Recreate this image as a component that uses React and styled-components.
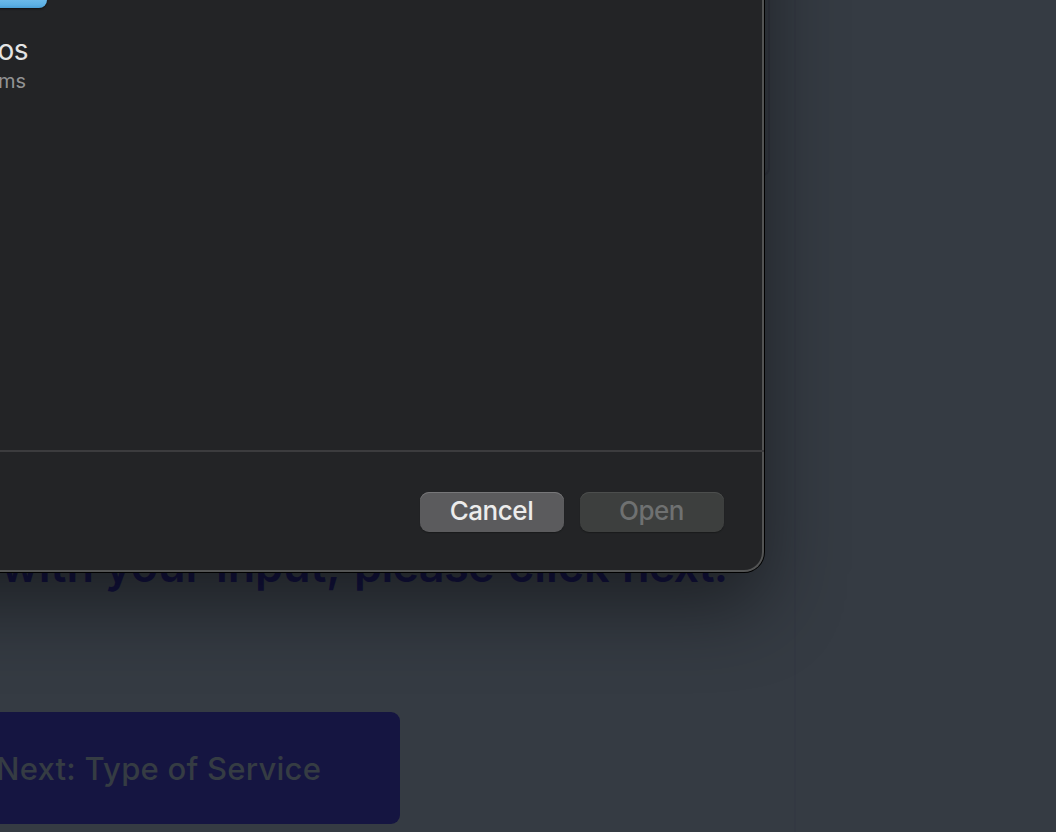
import React from "react";
import styled, { createGlobalStyle } from "styled-components";

const GlobalStyle = createGlobalStyle`
  * { box-sizing: border-box; }
  body { margin: 0; background: #353b43; overflow: hidden; }
`;

const Page = styled.div`
  position: relative;
  width: 1056px;
  height: 832px;
  overflow: hidden;
  background: #353b43;
  font-family: Inter, "Liberation Sans", sans-serif;
`;

const FormCard = styled.main`
  display: flex;
  flex-direction: column;
  align-items: flex-start;
  width: 796px;
  height: 832px;
  border-right: 2px solid #333842;
`;

const UploadPanel = styled.section`
  width: 770px;
  height: 176px;
  border: 2px solid #30343e;
  border-width: 0 2px 2px 0;
  border-radius: 0 0 8px 0;
`;

const Instruction = styled.p`
  display: flex;
  margin: 360px 0 0;
  height: 60px;
  padding-left: 1px;
  color: #131340;
  font-size: 45px;
  font-weight: 600;
  line-height: 60px;
  white-space: nowrap;
`;

const Word = styled.span`
  flex: none;
  width: ${(p) => p.$width}px;
  letter-spacing: ${(p) => p.$spacing || 0}px;
`;

const NextButton = styled.button`
  display: flex;
  align-items: center;
  width: 408px;
  height: 112px;
  margin: 116px 0 0 -8px;
  padding: 0 0 0 4px;
  border: 0;
  border-radius: 9px;
  background: #151541;
  color: #353c43;
  font-family: inherit;
  font-size: 31px;
  font-weight: 530;
  letter-spacing: 0.25px;
  white-space: nowrap;
`;

const Dialog = styled.div`
  position: absolute;
  top: -200px;
  left: -200px;
  display: flex;
  flex-direction: column;
  width: 964px;
  height: 772px;
  padding: 200px 0 0 200px;
  border: 2px solid #535454;
  border-top: 0;
  border-left: 0;
  border-radius: 20px;
  background: #232426;
  box-shadow: 0 0 0 1px #000, 0 34px 80px rgba(0, 0, 0, 0.45);
`;

const FileArea = styled.div`
  height: 450px;
`;

const FolderBottom = styled.div`
  width: 55px;
  height: 8px;
  margin-left: -8px;
  border-radius: 0 0 8px 0;
  background: linear-gradient(#6bb9e9 0, #5cb0e4 5px, #4a9fd6 8px);
  box-shadow: 0 1px 2px #111;
`;

const FolderName = styled.div`
  width: 28px;
  height: 32px;
  margin-top: 26px;
  display: flex;
  justify-content: flex-end;
  color: #e4e4e4;
  font-size: 28px;
  letter-spacing: -0.5px;
  line-height: 32px;
`;

const FolderCount = styled(FolderName)`
  width: 26px;
  margin-top: -1px;
  color: #929394;
  font-size: 20px;
  letter-spacing: 0;
`;

const Actions = styled.footer`
  display: flex;
  justify-content: flex-end;
  gap: 16px;
  height: 120px;
  margin-right: -2px;
  padding: 40px 40px 0 0;
  border-top: 2px solid #3c3c3e;
`;

const ActionButton = styled.button`
  width: 144px;
  height: 40px;
  padding: 0 1px 4px 0;
  border: 0;
  border-radius: 9px;
  background: ${(p) => (p.disabled ? "#3d3f3e" : "#5b5b5d")};
  color: ${(p) => (p.disabled ? "#6f7171" : "#ececec")};
  box-shadow: inset 0 1px 0 ${(p) => (p.disabled ? "#4c4e4d" : "#777779")}, 0 1px 1px #1a1b1c;
  font-family: inherit;
  font-size: 26px;
  font-weight: ${(p) => (p.disabled ? 450 : 480)};
  letter-spacing: -0.45px;
`;

const WORDS = [
  { text: "with", width: 104 },
  { text: "your", width: 111 },
  { text: "input,", width: 138, spacing: -0.1 },
  { text: "please", width: 154, spacing: -0.7 },
  { text: "click", width: 114 },
  { text: "next.", width: 104, spacing: -0.9 },
];

export default function App() {
  return (
    <Page>
      <GlobalStyle />
      <FormCard>
        <UploadPanel />
        <Instruction>
          {WORDS.map(({ text, width, spacing }) => (
            <Word key={text} $width={width} $spacing={spacing}>{text}</Word>
          ))}
        </Instruction>
        <NextButton>Next: Type of Service</NextButton>
      </FormCard>
      <Dialog role="dialog">
        <FileArea>
          <FolderBottom />
          <FolderName>Videos</FolderName>
          <FolderCount>items</FolderCount>
        </FileArea>
        <Actions>
          <ActionButton>Cancel</ActionButton>
          <ActionButton disabled>Open</ActionButton>
        </Actions>
      </Dialog>
    </Page>
  );
}
